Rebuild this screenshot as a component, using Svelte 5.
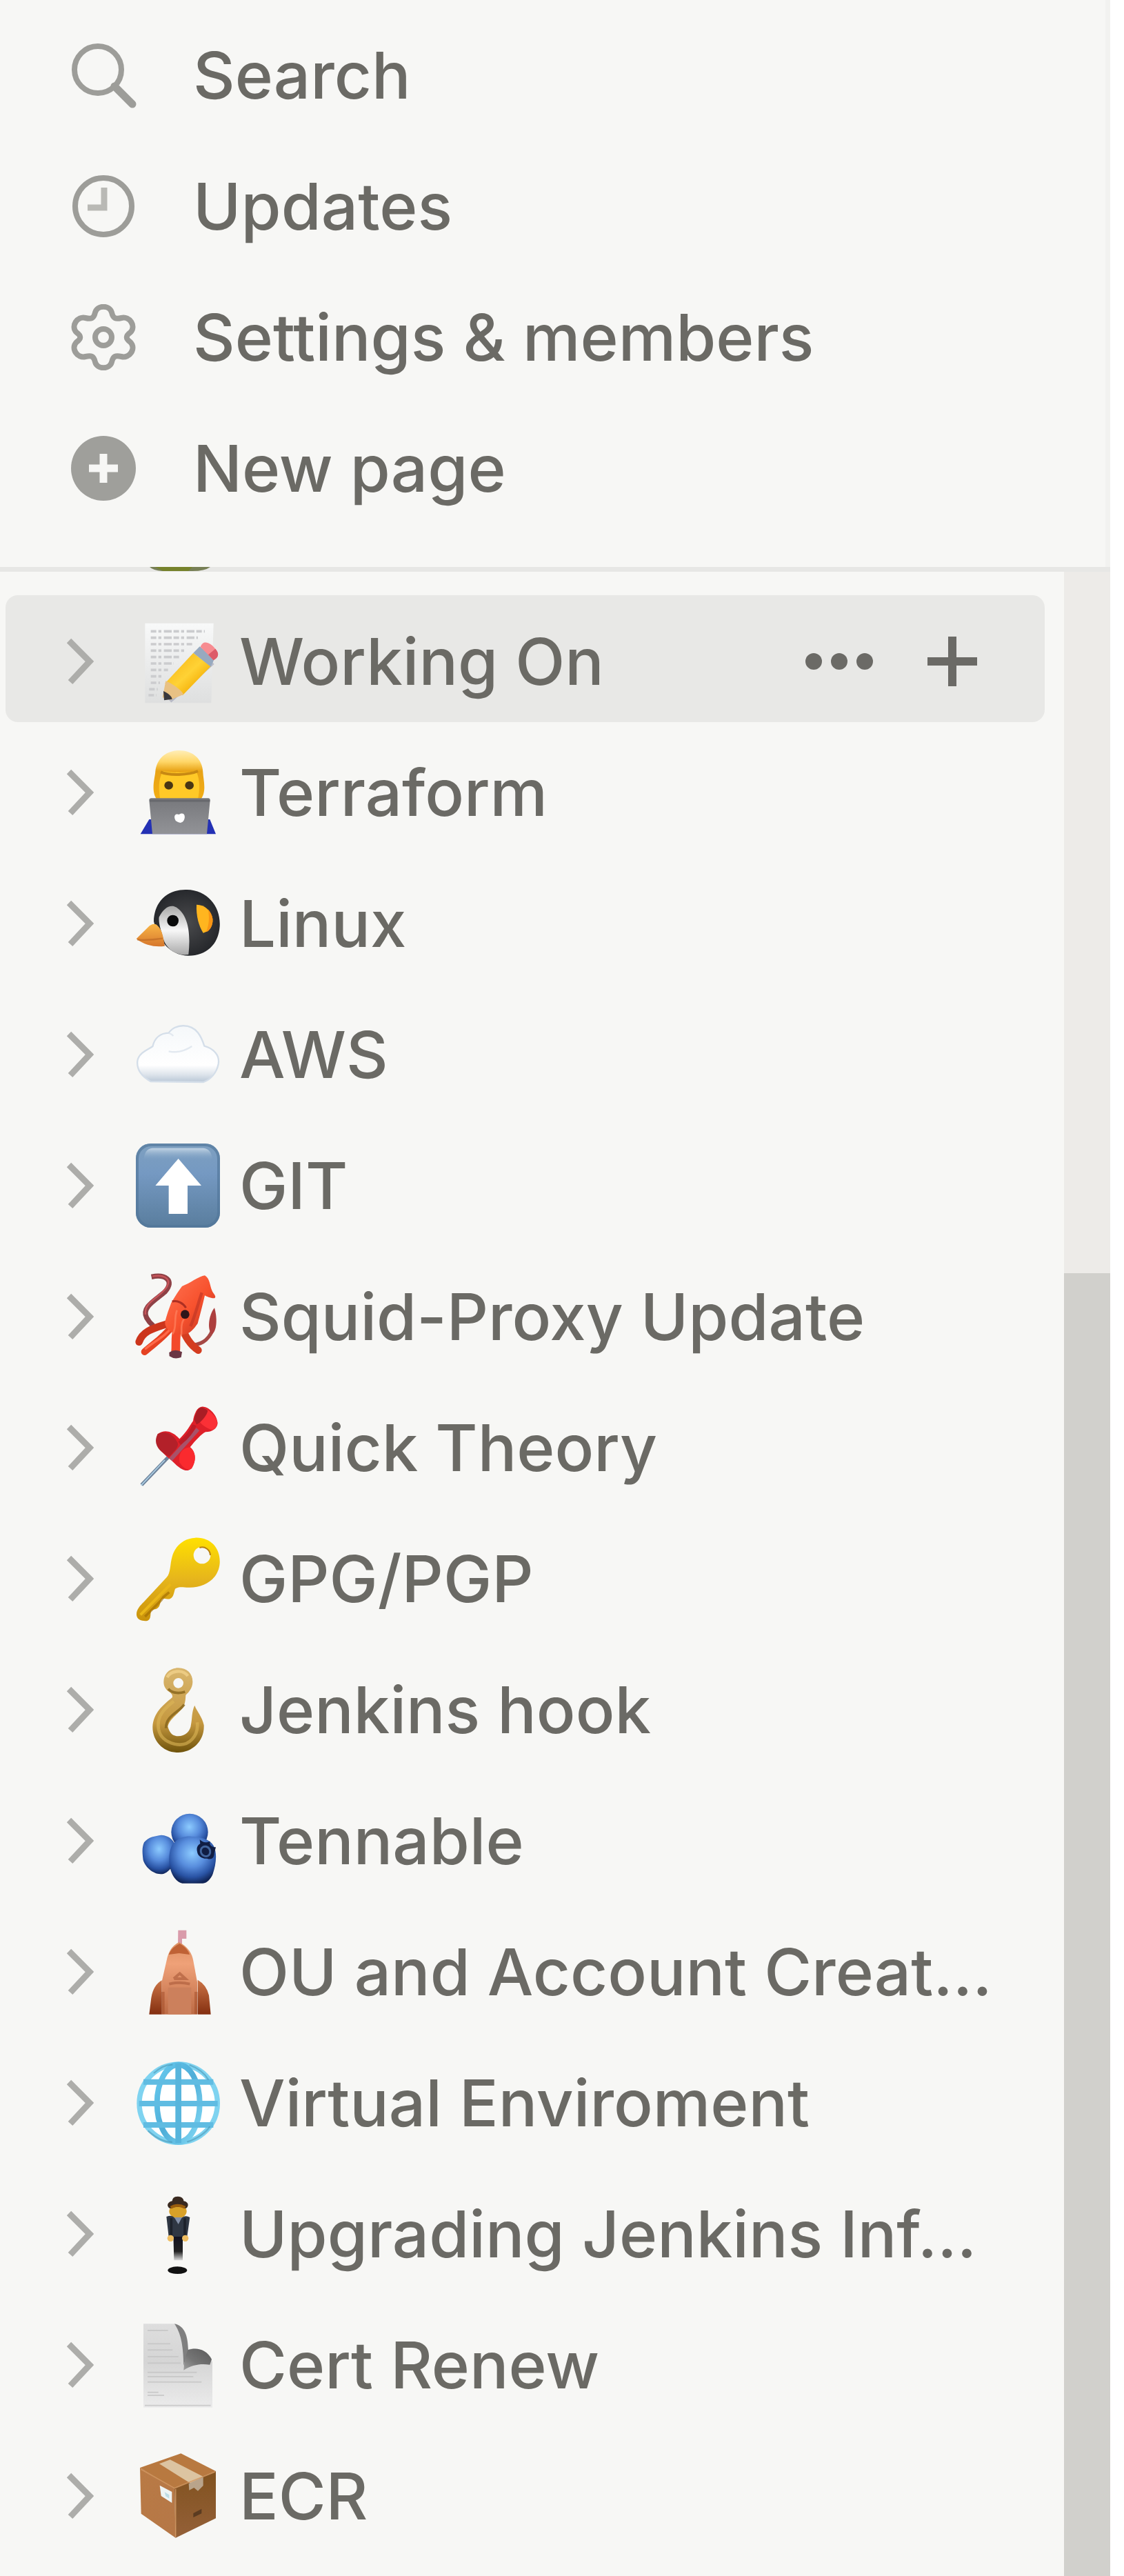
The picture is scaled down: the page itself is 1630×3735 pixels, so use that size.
<script lang="ts">
	interface Page {
		icon: string;
		title: string;
		active?: boolean;
	}

	const actions = [
		{ icon: 'search', label: 'Search' },
		{ icon: 'updates', label: 'Updates' },
		{ icon: 'settings', label: 'Settings & members' },
		{ icon: 'new', label: 'New page' }
	];

	const pages: Page[] = [
		{ icon: 'memo', title: 'Working On', active: true },
		{ icon: 'technologist', title: 'Terraform' },
		{ icon: 'penguin', title: 'Linux' },
		{ icon: 'cloud', title: 'AWS' },
		{ icon: 'arrow-up', title: 'GIT' },
		{ icon: 'squid', title: 'Squid-Proxy Update' },
		{ icon: 'pushpin', title: 'Quick Theory' },
		{ icon: 'key', title: 'GPG/PGP' },
		{ icon: 'hook', title: 'Jenkins hook' },
		{ icon: 'blueberries', title: 'Tennable' },
		{ icon: 'hut', title: 'OU and Account Creat...' },
		{ icon: 'globe', title: 'Virtual Enviroment' },
		{ icon: 'levitating', title: 'Upgrading Jenkins Inf...' },
		{ icon: 'page-curl', title: 'Cert Renew' },
		{ icon: 'package', title: 'ECR' }
	];
</script>

{#snippet actionIcon(name: string)}
	<svg class="action-icon" viewBox="0 0 96 96" fill="none" stroke="#9d9d99" aria-hidden="true">
		{#if name === 'search'}
			<circle cx="40" cy="40" r="34" stroke-width="8" />
			<path d="M64 64 90 90" stroke-width="11" stroke-linecap="round" />
		{:else if name === 'updates'}
			<circle cx="48" cy="48" r="41" stroke-width="8" />
			<path d="M49 21V50H25" stroke="#b9b9b5" stroke-width="9" />
		{:else if name === 'settings'}
			<path
				d="M36 12C39 1 57 1 60 12C62 21 66 22 74 20C86 17 96 32 87 41C80 46 80 50 87 55C96 64 86 79 74 76C66 74 62 75 60 84C57 95 39 95 36 84C34 75 30 74 22 76C10 79 0 64 9 55C16 50 16 46 9 41C0 32 10 17 22 20C30 22 34 21 36 12Z"
				stroke-width="8"
				stroke-linejoin="round"
			/>
			<circle cx="48" cy="48" r="12" stroke-width="8" />
		{:else}
			<circle cx="48" cy="48" r="47" fill="#9f9f9b" stroke="none" />
			<path d="M48 27V69M27 48H69" stroke="#f7f7f5" stroke-width="11" />
		{/if}
	</svg>
{/snippet}

{#snippet pageIcon(name: string)}
	<svg class="page-icon" viewBox="0 0 366 366" fill="none" aria-hidden="true">
		{#if name === 'memo'}
			<defs>
				<linearGradient id="memo-paper" x2="0" y2="1">
					<stop stop-color="#f8f9f9" />
					<stop offset="1" stop-color="#dedfdf" />
				</linearGradient>
				<linearGradient id="memo-pencil" x2="1" y2="1">
					<stop stop-color="#f4ae0c" />
					<stop offset=".5" stop-color="#ffd235" />
					<stop offset=".8" stop-color="#f2aa00" />
					<stop offset="1" stop-color="#7b5a25" />
				</linearGradient>
			</defs>
			<path d="M40 17H338L328 364H40Z" fill="url(#memo-paper)" />
			<g stroke="#cbccce" stroke-width="11" stroke-dasharray="24 9 13 11 34 8">
				<path d="M65 52H300M65 80H270M65 108H245M65 136H215M65 164H190M65 192H165M65 220H140M65 248H118M65 276H105M58 304H95M55 330H90" />
			</g>
			<path d="M148 355 335 188" stroke="#8388a5" stroke-width="18" opacity=".45" />
			<path d="M127 278 250 146 326 204 204 330Z" fill="url(#memo-pencil)" />
			<path d="M130 268C155 278 190 300 208 326L152 350 116 340Z" fill="#e8c184" />
			<path d="M120 312C140 322 155 332 158 347L123 352Z" fill="#39383d" />
			<path d="M250 146 278 118 342 172 326 206Z" fill="#97a9bf" />
			<path d="M281 120C293 88 322 99 346 128C366 151 358 166 338 178Z" fill="#f78c91" />
			<path d="M315 154 338 178C358 166 366 151 346 128Z" fill="#dd5b68" />
		{:else if name === 'technologist'}
			<defs>
				<linearGradient id="tech-hair" x2="0" y2="1">
					<stop stop-color="#ffeeb7" />
					<stop offset=".23" stop-color="#ffd768" />
					<stop offset=".42" stop-color="#e8a316" />
					<stop offset="1" stop-color="#f2ad14" />
				</linearGradient>
				<linearGradient id="tech-lid" x2="0" y2="1">
					<stop stop-color="#77787c" />
					<stop offset="1" stop-color="#929397" />
				</linearGradient>
			</defs>
			<path d="M20 364 58 300H322L348 364Z" fill="#2431b4" />
			<path d="M92 214C63 175 84 118 85 91C92 30 137 0 189 0C245 0 290 36 292 95C293 127 310 178 282 214Z" fill="url(#tech-hair)" />
			<path d="M106 214C98 170 98 120 119 90C160 98 225 98 262 90C281 128 278 173 270 214Z" fill="#ffc927" />
			<path d="M108 94C145 110 230 108 270 90" stroke="#c88913" stroke-width="12" />
			<ellipse cx="143" cy="152" rx="19" ry="18" fill="#493614" />
			<ellipse cx="233" cy="152" rx="19" ry="18" fill="#493614" />
			<path d="M58 216Q59 208 67 208H315Q323 208 323 217L309 364H72Z" fill="url(#tech-lid)" />
			<path d="M60 219H322" stroke="#67686d" stroke-width="9" />
			<path d="M188 279C207 267 219 282 209 304C199 322 184 313 174 307C161 286 172 272 188 279Z" fill="#fff" />
		{:else if name === 'penguin'}
			<defs>
				<linearGradient id="penguin-face" x2="0" y2="1">
					<stop stop-color="#a8a8a7" />
					<stop offset=".5" stop-color="#f7f7f7" />
					<stop offset="1" stop-color="#aaa" />
				</linearGradient>
				<linearGradient id="penguin-beak" x2="0" y2="1">
					<stop stop-color="#f9b646" />
					<stop offset="1" stop-color="#d6772d" />
				</linearGradient>
				<radialGradient id="penguin-head" cx=".5" cy=".5" r=".55">
					<stop stop-color="#4a4b4d" />
					<stop offset="1" stop-color="#232529" />
				</radialGradient>
			</defs>
			<path d="M78 174C80 84 142 33 222 36C314 38 370 112 365 195C360 277 303 324 229 323C158 321 103 274 78 174Z" fill="url(#penguin-head)" />
			<path d="M101 155C122 112 155 95 181 116C229 151 239 230 229 318C174 327 130 291 117 243C111 213 98 186 101 155Z" fill="url(#penguin-face)" />
			<circle cx="161" cy="171" r="25" fill="#090a0b" />
			<path d="M2 250 52 200C66 186 84 180 94 192C117 212 120 250 126 281C88 287 42 280 2 250Z" fill="url(#penguin-beak)" />
			<path d="M6 253C46 257 77 254 116 248" stroke="#b76423" stroke-width="7" opacity=".6" />
			<path d="M264 101C300 101 326 126 334 163C337 193 320 218 293 224C274 193 262 153 264 101Z" fill="#ffb51f" />
			<path d="M314 121C325 134 333 148 334 163C337 193 320 218 305 220C319 193 321 153 314 121Z" fill="#f99515" />
		{:else if name === 'cloud'}
			<defs>
				<linearGradient id="cloud-fill" x2="0" y2="1">
					<stop stop-color="#f5f8fa" />
					<stop offset=".7" stop-color="#fff" />
					<stop offset=".86" stop-color="#dfe5ec" />
					<stop offset="1" stop-color="#b9c7d6" />
				</linearGradient>
			</defs>
			<path
				d="M64 300C25 278 3 248 7 211C12 178 45 165 73 148C82 109 109 90 143 89C170 50 237 45 270 88C286 109 292 127 298 146C338 157 366 185 359 224C351 263 326 291 294 303Z"
				fill="url(#cloud-fill)"
				stroke="#d4dee9"
				stroke-width="7"
			/>
			<path d="M144 90Q156 94 163 102M143 169Q194 180 244 147" stroke="#dce3ec" stroke-width="7" opacity=".8" />
		{:else if name === 'arrow-up'}
			<defs>
				<linearGradient id="arrow-tile" x2="0" y2="1">
					<stop stop-color="#7ea0c0" />
					<stop offset=".35" stop-color="#7599c2" />
					<stop offset="1" stop-color="#597d9d" />
				</linearGradient>
				<linearGradient id="arrow-shine" x2="0" y2="1">
					<stop stop-color="#c3d5e5" />
					<stop offset="1" stop-color="#769bc1" stop-opacity="0" />
				</linearGradient>
			</defs>
			<rect width="366" height="366" rx="64" fill="url(#arrow-tile)" />
			<rect x="6" y="6" width="354" height="354" rx="60" stroke="#52779a" stroke-width="12" opacity=".65" />
			<path d="M34 76Q36 22 72 20H294Q330 22 334 76Z" fill="url(#arrow-shine)" />
			<path d="M185 66 285 183H225V306H143V183H85Z" fill="#fff" />
		{:else if name === 'squid'}
			<defs>
				<linearGradient id="squid-body" x2="1" y2="1">
					<stop stop-color="#ff7655" />
					<stop offset=".55" stop-color="#f7512d" />
					<stop offset="1" stop-color="#b93120" />
				</linearGradient>
			</defs>
			<path d="M68 10C125 -2 173 23 126 76C85 111 23 143 47 188Q58 208 76 223" stroke="#8e4146" stroke-width="22" />
			<path d="M72 8C122 -2 155 18 136 52C105 101 34 118 42 174" stroke="#c8555a" stroke-width="7" />
			<path d="M248 306C293 304 325 274 339 226" stroke="#a64945" stroke-width="16" />
			<path d="M342 145C354 185 354 239 333 259C310 249 314 180 342 145Z" fill="#ad3f3e" />
			<g stroke-linecap="round">
				<path d="M145 211C103 229 32 236 14 293" stroke="#cc351c" stroke-width="32" />
				<path d="M157 225C126 270 79 300 38 336" stroke="#e54222" stroke-width="30" />
				<path d="M158 226C132 267 82 289 43 322" stroke="#ff6948" stroke-width="10" />
				<path d="M199 223C218 286 247 313 271 329" stroke="#d43d20" stroke-width="32" />
				<path d="M182 221C170 270 176 308 173 333" stroke="#f3492a" stroke-width="38" />
			</g>
			<path d="M145 339Q170 320 201 337L197 360Q169 371 146 355Z" fill="#6a3644" />
			<path
				d="M300 4C323 18 321 47 331 69C337 84 353 95 342 103C325 104 307 95 300 91C291 130 279 178 269 213C251 238 231 266 194 260C149 255 121 230 128 201C134 178 144 149 154 123C171 95 187 69 201 51C234 39 276 6 300 4Z"
				fill="url(#squid-body)"
			/>
			<path d="M158 117C182 111 206 125 218 145" stroke="#ad2f22" stroke-width="9" />
			<path d="M287 79C270 128 257 183 238 225" stroke="#ba3425" stroke-width="13" opacity=".6" />
			<path d="M179 155C164 194 180 225 160 259M209 194C190 221 204 245 196 269" stroke="#ff8260" stroke-width="8" opacity=".7" />
			<circle cx="214" cy="173" r="19" fill="#30161a" />
		{:else if name === 'pushpin'}
			<path d="M25 345 143 222" stroke="#6f839b" stroke-width="15" />
			<path d="M23 347 126 237" stroke="#acd0e5" stroke-width="5" />
			<path d="M95 124C130 98 166 118 190 145C223 112 235 87 249 67C253 34 270 1 294 5C323 8 353 42 356 76C354 101 332 115 303 115C286 123 259 152 236 181C261 202 265 238 243 273C221 293 196 280 154 238C116 209 79 169 95 124Z" fill="#de2029" />
			<path d="M95 124C128 105 164 126 176 152C196 176 168 196 145 222C102 201 72 167 95 124Z" fill="#b32029" />
			<path d="M236 181C261 202 264 237 243 273C222 289 201 264 190 247C184 210 200 184 236 181Z" fill="#fa2a2e" />
			<path d="M260 39C258 15 286 -3 308 16C350 43 373 85 334 106C301 99 269 70 260 39Z" fill="#fb3036" />
			<path d="M254 61C264 7 283 -5 313 22C310 43 282 75 264 82Z" fill="#a91d25" />
			<path d="M151 235 270 103" stroke="#a85269" stroke-width="18" />
			<path d="M190 164Q240 126 255 85" stroke="#bd1c27" stroke-width="18" />
		{:else if name === 'key'}
			<defs>
				<linearGradient id="key-gold" x2="0" y2="1">
					<stop stop-color="#ffe000" />
					<stop offset=".5" stop-color="#e6b51c" />
					<stop offset="1" stop-color="#c9920b" />
				</linearGradient>
			</defs>
			<path
				d="M258 5C327 2 369 52 365 116C359 185 299 221 235 221C207 222 190 214 171 227C165 243 165 263 149 270C139 276 124 264 113 272C104 282 108 303 94 311C86 319 72 313 66 325C62 341 67 360 50 366C30 369 7 362 4 346C-2 321 19 300 33 286L134 177C152 159 148 121 158 87C171 37 212 7 258 5Z"
				fill="url(#key-gold)"
			/>
			<path d="M20 340 151 207" stroke="#eab717" stroke-width="12" />
			<path d="M40 348 110 277 121 262 145 242" stroke="#9d6800" stroke-width="11" opacity=".6" />
			<circle cx="288" cy="81" r="37" fill="#f7f7f5" />
			<path d="M277 48C300 40 323 57 324 81" stroke="#b87f0c" stroke-width="6" />
		{:else if name === 'hook'}
			<defs>
				<linearGradient id="hook-brass" x2="0" y2="1">
					<stop stop-color="#d9b66e" />
					<stop offset=".65" stop-color="#c5983f" />
					<stop offset="1" stop-color="#6f530b" />
				</linearGradient>
			</defs>
			<path
				d="M185 1C223 1 248 27 247 63C246 87 233 105 217 119C216 139 215 154 206 172C189 198 145 223 139 256C146 282 158 298 184 298C215 298 238 276 240 247C246 220 242 193 256 164C263 187 290 215 296 250C299 320 245 368 184 369C119 370 72 319 73 257C77 198 116 164 158 130Q163 117 145 105C129 94 121 80 121 62C121 28 145 1 185 1ZM185 45A22 22 0 1 0 185 89A22 22 0 1 0 185 45Z"
				fill="url(#hook-brass)"
				fill-rule="evenodd"
			/>
			<path d="M141 92Q167 119 214 105M210 160C192 192 130 207 131 263" stroke="#86641c" stroke-width="11" opacity=".8" />
			<path d="M136 42C151 14 203 4 226 36" stroke="#eccb83" stroke-width="13" />
			<path d="M165 146C124 178 89 210 99 268C106 303 132 323 169 332C235 347 273 293 267 238" stroke="#dcb657" stroke-width="14" opacity=".6" />
		{:else if name === 'blueberries'}
			<defs>
				<radialGradient id="berry" cx=".49" cy=".36" r=".65">
					<stop stop-color="#8ccbff" />
					<stop offset=".45" stop-color="#588ddd" />
					<stop offset=".78" stop-color="#2953a4" />
					<stop offset="1" stop-color="#112557" />
				</radialGradient>
			</defs>
			<circle cx="234" cy="145" r="80" fill="url(#berry)" />
			<path d="M36 190C55 165 83 163 111 158C145 160 170 180 176 221C179 262 158 314 122 326C80 336 41 298 32 267C28 235 26 213 36 190Z" fill="url(#berry)" />
			<path d="M154 209C170 177 206 162 240 164C281 166 322 174 338 204C356 238 348 288 335 327C328 346 310 368 292 368H202C167 359 151 320 146 285C143 257 146 229 154 209Z" fill="url(#berry)" />
			<path d="M278 178C295 192 304 192 323 185C318 200 330 211 348 211L341 238C341 260 327 267 310 260C291 263 268 249 267 230C263 212 269 202 280 196Z" fill="#101d43" />
			<ellipse cx="303" cy="229" rx="20" ry="22" transform="rotate(-30 303 229)" stroke="#41649c" stroke-width="9" />
		{:else if name === 'hut'}
			<defs>
				<linearGradient id="hut-wall" x2="0" y2="1">
					<stop stop-color="#dc9264" />
					<stop offset=".3" stop-color="#efa178" />
					<stop offset="1" stop-color="#bd6b45" />
				</linearGradient>
				<linearGradient id="hut-side" x2="0" y2="1">
					<stop stop-color="#cc7547" />
					<stop offset="1" stop-color="#842f10" />
				</linearGradient>
			</defs>
			<path d="M184 2H220V39H201V67H183Z" fill="#d99baa" />
			<path d="M58 368 67 296Q76 241 113 220V368ZM326 368 318 285Q307 239 269 218V368Z" fill="url(#hut-side)" />
			<path d="M188 54C229 76 244 103 250 135L267 227V368H113V225L137 120C148 86 158 70 188 54Z" fill="url(#hut-wall)" />
			<path d="M191 60C215 75 230 92 234 108L188 102 143 108C154 82 169 72 191 60Z" fill="#bf6235" />
			<path d="M140 368V251H241V368Z" fill="#cc805c" />
			<path d="M145 236Q188 224 235 236M165 213 191 190 216 213H166" stroke="#b0613f" stroke-width="12" opacity=".7" />
			<path d="M118 270V367M262 367V270" stroke="#9b4421" stroke-width="14" opacity=".45" />
		{:else if name === 'globe'}
			<defs>
				<linearGradient id="globe-lines" x1="0" x2="1" y2="1">
					<stop stop-color="#67caef" />
					<stop offset=".5" stop-color="#4faed8" />
					<stop offset="1" stop-color="#83d9f5" />
				</linearGradient>
			</defs>
			<circle cx="185" cy="185" r="170" fill="#fff" stroke="#7fd3f0" stroke-width="22" />
			<ellipse cx="185" cy="185" rx="93" ry="168" stroke="url(#globe-lines)" stroke-width="24" />
			<path d="M33 92H337M14 186H356M33 279H337" stroke="#60bce2" stroke-width="24" />
			<path d="M185 12V358" stroke="#58b5dc" stroke-width="26" />
			<path d="M78 54Q122 15 160 17M233 18Q292 40 316 83M53 304Q108 354 158 354M223 353Q293 329 322 286" stroke="#438eac" stroke-width="7" opacity=".5" />
		{:else if name === 'levitating'}
			<defs>
				<linearGradient id="lev-legs" x2="0" y2="1">
					<stop stop-color="#101020" />
					<stop offset=".66" stop-color="#222" />
					<stop offset="1" stop-color="#ddd" />
				</linearGradient>
			</defs>
			<path d="M163 183H204V298H166Z" fill="url(#lev-legs)" />
			<ellipse cx="183" cy="85" rx="38" ry="30" fill="#d8a128" />
			<path d="M158 40Q160 20 183 20Q206 20 208 40Q227 44 227 58Q225 70 216 72Q183 58 150 72Q140 70 138 58Q140 44 158 40Z" fill="#3a2a20" />
			<path d="M152 68Q183 50 214 68" stroke="#9a5c0d" stroke-width="12" />
			<path d="M133 108Q158 99 167 112L185 123 202 111Q217 101 235 111L223 195H143Z" fill="#2f3743" />
			<path d="M167 111 185 141 201 111Z" fill="#8491a9" />
			<path d="M154 115V191M213 115V191" stroke="#1d222b" stroke-width="11" />
			<circle cx="151" cy="202" r="14" fill="#efbe62" />
			<circle cx="215" cy="202" r="14" fill="#efbe62" />
			<ellipse cx="181" cy="341" rx="42" ry="16" fill="#111" />
		{:else if name === 'page-curl'}
			<defs>
				<linearGradient id="curl-paper" x2="0" y2="1">
					<stop stop-color="#dedede" />
					<stop offset=".45" stop-color="#d5d5d5" />
					<stop offset="1" stop-color="#ebebeb" />
				</linearGradient>
				<linearGradient id="curl-fold" x1="1" y1="0" x2="0" y2="1">
					<stop stop-color="#5a5a5a" />
					<stop offset=".6" stop-color="#757575" />
					<stop offset="1" stop-color="#a0a0a0" />
				</linearGradient>
			</defs>
			<path d="M33 4H174C214 21 223 64 226 116C262 104 310 116 333 170V368H33Z" fill="url(#curl-paper)" />
			<path d="M51 33H140M51 91H150M51 118H160M51 147H185M51 175H195M51 215H265M51 234H250M51 257H286M51 302H98M51 315H123M39 359H326" stroke="#c3c3c3" stroke-width="6" opacity=".75" />
			<path d="M168 4C212 14 226 52 228 118L208 186C206 110 200 50 168 4Z" fill="#6e6e6e" opacity=".85" />
			<path d="M226 118C266 104 308 116 330 158L322 182C282 176 244 182 208 206Q210 160 226 118Z" fill="url(#curl-fold)" />
		{:else}
			<defs>
				<linearGradient id="box-left" x2="1" y2="1">
					<stop stop-color="#b97a45" />
					<stop offset="1" stop-color="#b57747" />
				</linearGradient>
				<linearGradient id="box-right" x2="0" y2="1">
					<stop stop-color="#81521f" />
					<stop offset="1" stop-color="#946038" />
				</linearGradient>
			</defs>
			<path d="M18 60 168 145 173 365 23 260Z" fill="url(#box-left)" />
			<path d="M168 145 348 75V280L173 365Z" fill="url(#box-right)" />
			<path d="M196 -2 348 75 168 149 18 60Z" fill="#b87940" />
			<path d="M102 43 149 25 292 98 244 132Z" fill="#dcc4a1" />
			<path d="M230 129 293 100V138L270 161 253 147 232 158Z" fill="#b9a48b" />
			<path d="M104 137 157 165V213L110 183Z" fill="#eef4f4" />
			<path d="M125 166 145 178V194L130 184Z" fill="#bddce5" />
			<path d="M173 152V360M22 67 168 149 345 78" stroke="#d29863" stroke-width="5" opacity=".8" />
			<path d="M250 258 286 239V259L250 276Z" fill="#5b3b20" />
		{/if}
	</svg>
{/snippet}

<div class="sidebar">
	<nav class="actions" aria-label="Workspace">
		{#each actions as action}
			<button class="action">
				{@render actionIcon(action.icon)}
				<span>{action.label}</span>
			</button>
		{/each}
	</nav>

	<!-- lower edge of the icon that has scrolled out of view -->
	<div class="divider">
		<svg class="sliver" viewBox="0 0 88 7" preserveAspectRatio="none" aria-hidden="true">
			<path d="M0 0H88Q80 6 62 6H18Q5 5 0 0Z" fill="#777f55" />
			<path d="M8 0H62L56 6H20Z" fill="#76822b" />
		</svg>
	</div>

	<div class="scroller">
		<ul class="pages">
			{#each pages as page}
				<li class="page" class:active={page.active}>
					<button class="toggle" aria-label="Expand {page.title}">
						<svg class="chevron" viewBox="0 0 40 68" fill="none" aria-hidden="true">
							<path d="M4 4 34 34 6 64" stroke="#adadaa" stroke-width="9" />
						</svg>
					</button>
					<a class="link" href="#{page.icon}">
						{@render pageIcon(page.icon)}
						<span>{page.title}</span>
					</a>
					{#if page.active}
						<div class="tools">
							<button class="tool" aria-label="More options">
								<svg class="dots" viewBox="0 0 98 24" fill="#6b6a66" aria-hidden="true">
									<circle cx="12" cy="12" r="12" />
									<circle cx="49" cy="12" r="12" />
									<circle cx="86" cy="12" r="12" />
								</svg>
							</button>
							<button class="tool" aria-label="Add a page inside">
								<svg class="plus" viewBox="0 0 72 72" fill="none" aria-hidden="true">
									<path d="M36 0V72M0 36H72" stroke="#6b6a66" stroke-width="12" />
								</svg>
							</button>
						</div>
					{/if}
				</li>
			{/each}
		</ul>
		<div class="track">
			<div class="thumb"></div>
		</div>
	</div>
</div>

<style>
	:global(body) {
		margin: 0;
		background: #fff;
	}
	.sidebar {
		display: flex;
		flex-direction: column;
		box-sizing: border-box;
		min-height: 100vh;
		margin-right: 20px;
		background: #f7f7f5;
		color: #6b6a65;
		font-family: Inter, 'Liberation Sans', sans-serif;
		font-size: 94px;
		font-weight: 500;
	}
	button {
		padding: 0;
		border: none;
		background: none;
		color: inherit;
		font: inherit;
		cursor: pointer;
	}
	svg {
		display: block;
		flex: none;
	}
	.actions {
		display: flex;
		flex-direction: column;
		padding: 14px 0 48px;
		border-right: 7px solid #f2f2f0;
	}
	.action {
		display: flex;
		align-items: center;
		gap: 82px;
		height: 190px;
		padding-left: 102px;
		text-align: left;
		white-space: nowrap;
	}
	.action-icon {
		width: 96px;
		height: 96px;
	}
	.divider {
		height: 7px;
		padding-left: 217px;
		background: #e7e7e5;
	}
	.sliver {
		width: 88px;
		height: 7px;
	}
	.scroller {
		display: flex;
		flex: 1;
	}
	.pages {
		flex: 1;
		min-width: 0;
		margin: 0;
		padding: 34px 28px 0 8px;
		list-style: none;
	}
	.page {
		display: flex;
		align-items: center;
		box-sizing: border-box;
		height: 184px;
		margin-bottom: 6px;
		padding: 8px 98px 0 80px;
		border-radius: 18px;
	}
	.active {
		background: #e8e8e6;
	}
	.toggle {
		padding: 16px 61px 16px 8px;
	}
	.chevron {
		width: 40px;
		height: 68px;
	}
	.link {
		display: flex;
		flex: 1;
		align-items: center;
		gap: 28px;
		color: inherit;
		text-decoration: none;
		white-space: nowrap;
	}
	.page-icon {
		width: 122px;
		height: 122px;
		overflow: visible;
	}
	.tools {
		display: flex;
		align-items: center;
		gap: 79px;
	}
	.dots {
		width: 98px;
		height: 24px;
	}
	.plus {
		width: 72px;
		height: 72px;
	}
	.track {
		display: grid;
		grid-template-rows: 35fr 65fr;
		width: 67px;
		background: #edebe8;
	}
	.thumb {
		grid-row: 2;
		background: #d1d0cc;
	}
</style>
